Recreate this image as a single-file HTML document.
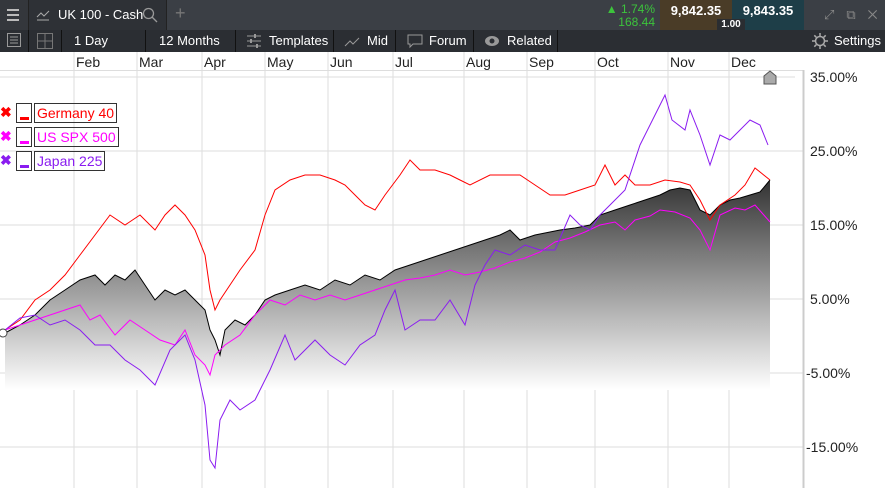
<!DOCTYPE html><html><head><meta charset="utf-8"><style>
body{margin:0;width:885px;height:488px;overflow:hidden;background:#fff;font-family:"Liberation Sans",sans-serif;position:relative}
.top{position:absolute;left:0;top:0;width:885px;height:30px;background:#3b3f45}
.bar{position:absolute;left:0;top:30px;width:885px;height:22px;background:#2b2e33;color:#fff;font-size:13px}
.bar div{position:absolute;top:0;height:22px;line-height:22px;border-right:1px solid #111;white-space:nowrap}
.bar svg{position:absolute;top:3px}
.a{position:absolute;font-size:14px;color:#222}
.lg{height:24px;width:200px;font-size:14px;position:relative;white-space:nowrap}
.lg .x{position:absolute;left:0;top:1px;font-weight:bold}
.lg .b{position:absolute;left:16px;top:0;width:16px;height:20px;border:1px solid #333;box-sizing:border-box}
.lg .b i{position:absolute;left:3px;top:13px;width:9px;height:3px}
.lg .t{position:absolute;left:34px;top:0;border:1px solid #333;padding:0 2px;line-height:18px}
</style></head><body>
<div class="top">
<div style="position:absolute;left:0;top:0;width:28px;height:30px;background:#34373c;border-right:1px solid #222"></div>
<div style="position:absolute;left:7px;top:9px;width:12px;height:2px;background:#bbb;box-shadow:0 5px #bbb,0 10px #bbb"></div>
<div style="position:absolute;left:29px;top:0;width:137px;height:30px;background:#2e3136;border-right:1px solid #222"></div>
<svg style="position:absolute;left:36px;top:8px" width="14" height="14"><path d="M1 12h12M1 9l4-4 3 3 5-5" stroke="#aaa" fill="none"/></svg>
<div style="position:absolute;left:58px;top:7px;color:#fff;font-size:13px">UK 100 - Cash</div>
<svg style="position:absolute;left:142px;top:7px" width="16" height="16"><circle cx="6.5" cy="6.5" r="5" stroke="#999" fill="none" stroke-width="1.3"/><path d="M10 10l5 5" stroke="#999" stroke-width="1.3"/></svg>
<div style="position:absolute;left:175px;top:3px;color:#777;font-size:18px">+</div>
<div style="position:absolute;left:605px;top:3px;color:#3cc43c;font-size:12px;text-align:right;width:50px;line-height:13px">▲ 1.74%<br>168.44</div>
<div style="position:absolute;left:660px;top:0;width:72px;height:30px;background:#4a3c27;color:#fff;font-size:13px;font-weight:bold;text-align:center;line-height:22px">9,842.35</div>
<div style="position:absolute;left:732px;top:0;width:72px;height:30px;background:#1e3e48;color:#fff;font-size:13px;font-weight:bold;text-align:center;line-height:22px">9,843.35</div>
<div style="position:absolute;left:717px;top:19px;width:28px;height:11px;background:#2a2d31;color:#fff;font-size:10px;font-weight:bold;text-align:center;line-height:11px">1.00</div>
<div style="position:absolute;left:824px;top:7px;color:#888;font-size:13px;letter-spacing:12px">⤢⧉✕</div>
</div>
<div class="bar">
<div style="left:0;width:28px"></div><div style="left:29px;width:32px"></div>
<svg style="left:7px" width="14" height="14"><rect x="0.5" y="0.5" width="13" height="13" fill="none" stroke="#999"/><path d="M3 4h8M3 7h8M3 10h8" stroke="#999"/></svg>
<svg style="left:37px" width="16" height="16"><path d="M0.5 0.5h15v15h-15zM8 0v16M0 8h16" fill="none" stroke="#777"/></svg>
<div style="left:62px;width:84px;padding-left:12px;box-sizing:border-box">1 Day</div>
<div style="left:147px;width:89px;padding-left:12px;box-sizing:border-box">12 Months</div>
<div style="left:237px;width:97px;padding-left:32px;box-sizing:border-box">Templates</div>
<svg style="left:246px" width="16" height="16"><path d="M1 3h14M1 8h14M1 13h14" stroke="#999"/><path d="M9 1v4M5 6v4M11 11v4" stroke="#999" stroke-width="2"/></svg>
<div style="left:335px;width:61px;padding-left:32px;box-sizing:border-box">Mid</div>
<svg style="left:344px" width="16" height="16"><path d="M1 13l5-5 3 3 6-6" stroke="#999" fill="none"/></svg>
<div style="left:397px;width:77px;padding-left:32px;box-sizing:border-box">Forum</div>
<svg style="left:407px" width="16" height="16"><path d="M1 2h14v9H6l-3 3v-3H1z" stroke="#999" fill="none"/></svg>
<div style="left:475px;width:83px;padding-left:32px;box-sizing:border-box">Related</div>
<svg style="left:484px" width="16" height="16"><ellipse cx="8" cy="8" rx="7" ry="5" fill="#999"/><circle cx="8" cy="8" r="2.5" fill="#2b2e33"/></svg>
<svg style="left:812px" width="16" height="16"><circle cx="8" cy="8" r="4.5" stroke="#aaa" fill="none" stroke-width="1.5"/><path d="M8 0v3M8 13v3M0 8h3M13 8h3M2.3 2.3l2 2M11.7 11.7l2 2M2.3 13.7l2-2M11.7 4.3l2-2" stroke="#aaa" stroke-width="1.5"/></svg>
<div style="left:834px;border:none">Settings</div>
</div>
<svg style="position:absolute;left:0;top:52px" width="885" height="436">
<g stroke="#ddd" fill="none">
<path d="M0 18.5H803M0 25H795"/>
<path d="M74 0V436M137 0V436M202 0V436M265 0V436M328 0V436M393 0V436M464 0V436M527 0V436M595 0V436M668 0V436M729 0V436"/>
<path d="M0 99H803M0 173H803M0 247H803M0 321H803M0 395H803"/>
<path d="M803.5 18V436" stroke="#ccc" stroke-width="2"/>
</g>
<defs><linearGradient id="g" x1="0" y1="0" x2="0" y2="1"><stop offset="0" stop-color="#333"/><stop offset="1" stop-color="#fff"/></linearGradient></defs>
<g transform="translate(0,-52)">
<path fill="url(#g)" d="M5 390L5 333 20 325 35 315 50 300 65 290 80 280 95 275 105 285 115 275 125 280 135 270 145 285 155 300 165 290 175 295 185 290 195 300 205 310 210 330 215 340 220 355 225 330 235 320 245 325 255 315 265 300 275 295 290 290 305 285 320 290 335 280 350 285 365 275 380 280 395 270 410 265 425 260 440 255 455 250 470 245 485 240 500 235 510 230 520 240 535 235 550 232 560 230 575 228 590 225 600 215 615 210 630 205 645 200 660 195 670 190 680 188 690 190 700 210 710 215 720 205 730 200 740 198 750 195 760 192 770 180 770 390Z"/>
<polyline fill="none" stroke="#000" points="5,333 20,325 35,315 50,300 65,290 80,280 95,275 105,285 115,275 125,280 135,270 145,285 155,300 165,290 175,295 185,290 195,300 205,310 210,330 215,340 220,355 225,330 235,320 245,325 255,315 265,300 275,295 290,290 305,285 320,290 335,280 350,285 365,275 380,280 395,270 410,265 425,260 440,255 455,250 470,245 485,240 500,235 510,230 520,240 535,235 550,232 560,230 575,228 590,225 600,215 615,210 630,205 645,200 660,195 670,190 680,188 690,190 700,210 710,215 720,205 730,200 740,198 750,195 760,192 770,180"/>
<polyline fill="none" stroke="#f00" points="5,330 20,320 35,300 50,290 65,275 80,255 95,235 110,215 125,225 140,215 155,230 165,215 175,205 185,215 195,230 205,255 210,290 215,310 220,300 230,285 240,270 255,250 265,215 275,190 290,180 305,175 320,175 335,180 345,185 355,195 365,205 375,210 385,195 400,175 410,160 420,170 435,170 450,175 460,180 470,185 490,175 505,175 520,175 535,185 550,195 565,195 580,190 595,185 605,165 615,185 625,175 635,185 650,185 665,180 680,182 690,185 700,200 710,220 720,205 735,195 745,185 755,168 770,180"/>
<polyline fill="none" stroke="#f0f" points="5,330 20,325 35,320 50,315 65,310 80,305 90,320 100,315 115,335 130,320 145,330 160,340 175,345 185,330 195,355 205,365 210,375 215,355 225,345 240,335 255,315 270,300 285,305 300,295 315,300 330,295 345,300 360,295 375,290 390,285 405,280 420,278 435,275 450,270 465,275 480,272 495,268 510,262 525,258 540,252 555,242 570,238 585,232 600,225 615,222 625,230 635,220 650,216 660,210 675,212 690,218 700,230 710,250 720,215 735,208 745,210 755,205 770,222"/>
<polyline fill="none" stroke="#8a1cf0" points="5,330 20,318 35,315 50,325 65,320 80,330 95,345 110,345 125,360 140,370 155,385 170,350 185,335 195,360 205,405 210,460 215,468 220,420 230,400 240,410 255,400 270,370 285,335 295,360 305,350 315,340 330,355 345,365 360,345 375,335 385,310 395,290 405,330 420,320 435,320 450,300 465,325 475,285 485,265 495,250 510,255 525,245 540,250 555,250 570,215 580,225 590,230 600,215 610,205 625,190 640,145 655,115 665,95 672,120 685,130 690,110 700,135 710,165 720,135 730,140 740,130 750,120 760,125 768,145"/>
<circle cx="3" cy="333" r="4" fill="#fff" stroke="#444"/>
<path d="M764 84V76L770 71 776 76V84Z" fill="#aaa" stroke="#555"/>
</g>
</svg>
<div class="a" style="top:54px;left:76px">Feb</div>
<div class="a" style="top:54px;left:139px">Mar</div>
<div class="a" style="top:54px;left:204px">Apr</div>
<div class="a" style="top:54px;left:267px">May</div>
<div class="a" style="top:54px;left:330px">Jun</div>
<div class="a" style="top:54px;left:395px">Jul</div>
<div class="a" style="top:54px;left:466px">Aug</div>
<div class="a" style="top:54px;left:529px">Sep</div>
<div class="a" style="top:54px;left:597px">Oct</div>
<div class="a" style="top:54px;left:670px">Nov</div>
<div class="a" style="top:54px;left:731px">Dec</div>
<div class="a" style="top:69px;left:810px">35.00%</div>
<div class="a" style="top:143px;left:810px">25.00%</div>
<div class="a" style="top:217px;left:810px">15.00%</div>
<div class="a" style="top:291px;left:810px">5.00%</div>
<div class="a" style="top:365px;left:806px">-5.00%</div>
<div class="a" style="top:439px;left:806px">-15.00%</div>
<div style="position:absolute;left:0;top:103px;width:200px">
<div class="lg" style="color:#f00"><span class="x">✖</span><span class="b"><i style="background:#f00"></i></span><span class="t">Germany 40</span></div>
<div class="lg" style="color:#f0f"><span class="x">✖</span><span class="b"><i style="background:#f0f"></i></span><span class="t">US SPX 500</span></div>
<div class="lg" style="color:#8a1cf0"><span class="x">✖</span><span class="b"><i style="background:#8a1cf0"></i></span><span class="t">Japan 225</span></div>
</div>
</body></html>
